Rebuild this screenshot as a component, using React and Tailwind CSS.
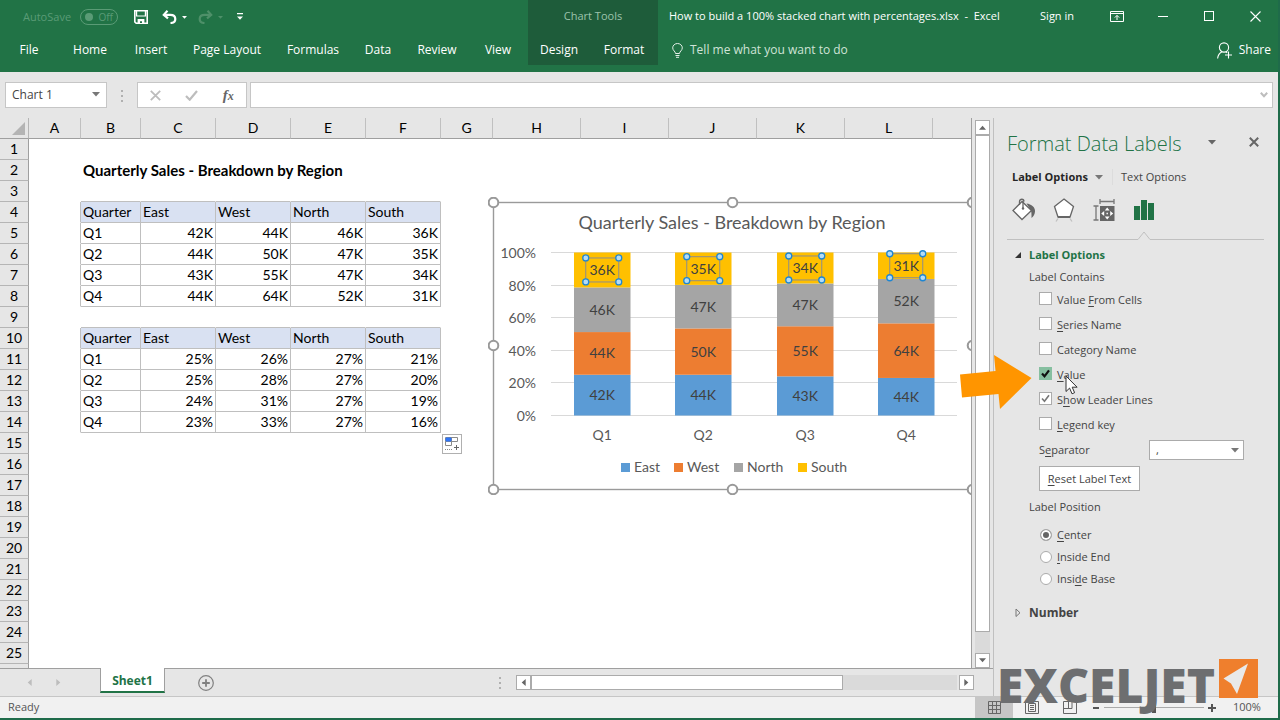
import React, { useState } from 'react';

const ribbonTabs = [
  { name: 'File', width: 'w-[58px]' },
  { name: 'Home', width: 'w-[64px]' },
  { name: 'Insert', width: 'w-[58px]' },
  { name: 'Page Layout', width: 'w-[94px]' },
  { name: 'Formulas', width: 'w-[78px]' },
  { name: 'Data', width: 'w-[52px]' },
  { name: 'Review', width: 'w-[66px]' },
  { name: 'View', width: 'w-[56px]' },
];

const columns = [
  { name: 'A', width: 'w-[52px]' },
  { name: 'B', width: 'w-[60px]' },
  { name: 'C', width: 'w-[75px]' },
  { name: 'D', width: 'w-[75px]' },
  { name: 'E', width: 'w-[75px]' },
  { name: 'F', width: 'w-[75px]' },
  { name: 'G', width: 'w-[52px]' },
  { name: 'H', width: 'w-[88px]' },
  { name: 'I', width: 'w-[88px]' },
  { name: 'J', width: 'w-[88px]' },
  { name: 'K', width: 'w-[88px]' },
  { name: 'L', width: 'w-[88px]' },
  { name: '', width: '' },
];

const regions = ['East', 'West', 'North', 'South'];

// values are rounded thousands, shares come from the unrounded numbers
const sales = [
  { quarter: 'Q1', values: [42, 44, 46, 36], shares: [25, 26, 27, 21] },
  { quarter: 'Q2', values: [44, 50, 47, 35], shares: [25, 28, 27, 20] },
  { quarter: 'Q3', values: [43, 55, 47, 34], shares: [24, 31, 27, 19] },
  { quarter: 'Q4', values: [44, 64, 52, 31], shares: [23, 33, 27, 16] },
];

const sum = (list) => list.reduce((a, b) => a + b, 0);

// sheet content, keyed by row number, starting at column B
const sheet = {
  2: ['Quarterly Sales - Breakdown by Region'],
  4: ['Quarter', ...regions],
  10: ['Quarter', ...regions],
};
sales.forEach(({ quarter, values, shares }, i) => {
  sheet[5 + i] = [quarter, ...values.map((v) => `${v}K`)];
  sheet[11 + i] = [quarter, ...shares.map((v) => `${v}%`)];
});

const ROWS = 25;
const rowNumbers = Array.from({ length: ROWS + 1 }, (_, i) => i + 1);

const Caret = ({ className = '' }) => (
  <svg viewBox="0 0 8 5" width="8" height="5" className={className} aria-hidden="true">
    <path d="M0 0h8L4 4.6z" fill="currentColor" />
  </svg>
);

const Dots = () => (
  <svg width="3" height="13" viewBox="0 0 3 13" className="shrink-0 text-[#b0b0b0]" aria-hidden="true">
    <path d="M0 1h2v2H0zM0 6h2v2H0zM0 11h2v2H0z" fill="currentColor" />
  </svg>
);

const QuickAccess = () => (
  <div className="flex h-[34px] items-center pl-[23px]">
    <span className="w-[57px] text-[11px] text-[#5a9b76]">AutoSave</span>
    <button className="flex h-4 w-[38px] items-center justify-between rounded-full border border-[#5a9b76] px-1 text-[10px] leading-none text-[#5a9b76]">
      <span className="h-2 w-2 rounded-full bg-[#5a9b76]" />
      Off
    </button>
    <button aria-label="Save" className="ml-4">
      <svg width="14" height="14" viewBox="0 0 14 14" fill="none" stroke="white" strokeWidth="1.6">
        <path d="M.8.8h12.4v12.4H2.2L.8 11.8z" />
        <path d="M2.6 1v5h8.8V1" strokeWidth="1.2" />
        <path d="M3.6 9h6.8v5H3.6z" fill="white" stroke="none" />
        <path d="M6 11.2h2V13H6z" fill="#217346" stroke="none" />
      </svg>
    </button>
    <button aria-label="Undo" className="ml-[14px]">
      <svg width="15" height="14" viewBox="0 0 15 14" fill="none" stroke="white" strokeWidth="2.2">
        <path d="M5.5 .8L1.8 4.8l4.2 3.6" />
        <path d="M2 4.8h6.3c3 0 5 1.6 5 4.1 0 2.4-1.8 4-4.8 4.1" />
      </svg>
    </button>
    <Caret className="ml-[5px] w-[5px] text-white" />
    <button aria-label="Redo" className="ml-[11px]">
      <svg width="15" height="14" viewBox="0 0 15 14" fill="none" stroke="#4e9069" strokeWidth="2.2">
        <path d="M9.5 .8l3.7 4L9 8.4" />
        <path d="M13 4.8H6.7c-3 0-5 1.6-5 4.1 0 2.4 1.8 4 4.8 4.1" />
      </svg>
    </button>
    <Caret className="ml-[5px] w-[5px] text-[#4e9069]" />
    <button aria-label="Customize Quick Access Toolbar" className="ml-[14px]">
      <svg width="6" height="8" viewBox="0 0 6 8" fill="white">
        <path d="M0 0h6v1.3H0zM0 3.4h6L3 6.8z" />
      </svg>
    </button>
  </div>
);

const WindowButtons = () => (
  <div className="flex shrink-0">
    <button aria-label="Ribbon Display Options" className="flex h-[30px] w-[46px] items-center justify-center">
      <svg width="14" height="11" viewBox="0 0 14 11" fill="none" stroke="white">
        <path d="M.5.5h13v10H.5zM.5 2.5h13M7 9V4.5M4.8 6.6L7 4.4l2.2 2.2" />
      </svg>
    </button>
    <button aria-label="Minimize" className="flex h-[30px] w-[46px] items-center justify-center">
      <span className="h-px w-[10px] bg-white" />
    </button>
    <button aria-label="Maximize" className="flex h-[30px] w-[46px] items-center justify-center">
      <span className="h-[10px] w-[10px] border border-white" />
    </button>
    <button aria-label="Close" className="flex h-[30px] w-[46px] items-center justify-center">
      <svg width="11" height="11" viewBox="0 0 11 11" fill="none" stroke="white" strokeWidth="1.1">
        <path d="M.5.5l10 10M10.5.5l-10 10" />
      </svg>
    </button>
  </div>
);

const Header = () => (
  <header className="flex h-[72px] shrink-0 bg-[#217346] text-[12px] text-white">
    <div className="w-[528px] shrink-0">
      <QuickAccess />
      <nav className="flex">
        {ribbonTabs.map((tab) => (
          <button key={tab.name} className={`h-8 shrink-0 whitespace-nowrap text-center ${tab.width}`}>
            {tab.name}
          </button>
        ))}
      </nav>
    </div>

    <div className="h-[65px] w-[130px] shrink-0 bg-[#1e5c3a]">
      <div className="flex h-[32px] items-center justify-center text-[11px] text-[#9cc3ac]">Chart Tools</div>
      <nav className="flex pt-[2px]">
        <button className="h-8 w-[62px]">Design</button>
        <button className="h-8 w-[68px]">Format</button>
      </nav>
    </div>

    <div className="min-w-0 flex-1">
      <div className="mb-[2px] flex h-[32px] items-center pl-[11px] text-[11px]">
        <span className="truncate whitespace-pre">
          How to build a 100% stacked chart with percentages.xlsx{'  -  '}Excel
        </span>
        <button className="ml-auto mr-5 shrink-0">Sign in</button>
        <WindowButtons />
      </div>
      <div className="flex h-8 items-center pl-[14px] pr-[7px]">
        <svg width="11" height="15" viewBox="0 0 11 15" fill="none" stroke="#e4efe8" aria-hidden="true">
          <path d="M3.5 10.5c0-2-2.8-3-2.8-5.6a4.8 4.4 0 0 1 9.6 0c0 2.6-2.8 3.6-2.8 5.6z" />
          <path d="M3.5 12.5h4M4 14.3h3" />
        </svg>
        <button className="ml-[7px] text-[#cfe3d7]">Tell me what you want to do</button>
        <button className="ml-auto flex items-center gap-[7px]">
          <svg width="15" height="17" viewBox="0 0 15 17" fill="none" stroke="white" strokeWidth="1.1">
            <circle cx="7" cy="5.5" r="4.6" />
            <path d="M.6 16.5c.4-3.5 2-5.5 4.4-6.7M8.8 9.8l1.4.9M11.5 9.5v7M8 13h7" />
          </svg>
          Share
        </button>
      </div>
    </div>
  </header>
);

const FormulaBar = () => (
  <div className="flex h-[46px] shrink-0 items-start px-[5px] pt-[10px]">
    <div className="flex h-[26px] w-[102px] items-center border border-[#c6c6c6] bg-white">
      <input
        aria-label="Name Box"
        defaultValue="Chart 1"
        className="w-[80px] pl-[6px] text-[12px] text-[#444] outline-none"
      />
      <button aria-label="Open name list" className="-mt-px pl-[6px] text-[#777]">
        <Caret />
      </button>
    </div>
    <div className="flex h-[26px] w-[30px] items-center justify-center">
      <Dots />
    </div>
    <div className="flex h-[26px] w-[110px] items-center justify-around border border-[#c6c6c6] bg-white">
      <button aria-label="Cancel">
        <svg width="11" height="11" viewBox="0 0 11 11" stroke="#bdbdbd" strokeWidth="1.8">
          <path d="M.8.8l9.4 9.4M10.2.8L.8 10.2" />
        </svg>
      </button>
      <button aria-label="Enter">
        <svg width="13" height="11" viewBox="0 0 13 11" fill="none" stroke="#bdbdbd" strokeWidth="2.2">
          <path d="M1 6l3.7 3.7L12 1" />
        </svg>
      </button>
      <button
        aria-label="Insert Function"
        className="font-['Liberation_Serif',serif] text-[15px] leading-none font-bold text-[#666] italic"
      >
        f<span className="text-[12px]">x</span>
      </button>
    </div>
    <div className="ml-[3px] flex h-[26px] flex-1 items-center border border-[#c6c6c6] bg-white">
      <input aria-label="Formula Bar" className="min-w-0 flex-1 px-2 text-[12px] outline-none" />
      <button aria-label="Expand Formula Bar" className="mr-1">
        <svg width="8" height="6" viewBox="0 0 8 6" fill="none" stroke="#bdbdbd" strokeWidth="2">
          <path d="M.8.8L4 4.2 7.2.8" />
        </svg>
      </button>
    </div>
  </div>
);

const seriesColors = ['#5b9bd5', '#ed7d31', '#a5a5a5', '#ffc000'];
const plot = { left: 63, right: 469, top: 55.5, bottom: 218.5 };
const barLeft = [86, 187, 289, 390];
const barWidth = 56.5;
const legendLeft = [133, 186, 246, 310];

const Handle = ({ x, y }) => <circle cx={x} cy={y} r="4.8" fill="white" stroke="#999" strokeWidth="2" />;

const Chart = () => {
  const height = plot.bottom - plot.top;

  return (
    <svg
      width="490"
      height="298"
      viewBox="0 0 490 298"
      className="absolute top-[79px] left-[488px] font-['Lato',sans-serif] text-[14px]"
      role="img"
      aria-label="Quarterly Sales - Breakdown by Region"
    >
      <rect x="5.5" y="5.5" width="479" height="287" fill="white" stroke="#9a9a9a" strokeWidth="1.4" />
      <text x="244" y="32" textAnchor="middle" fill="#595959" className="text-[18px]">
        Quarterly Sales - Breakdown by Region
      </text>

      {[100, 80, 60, 40, 20, 0].map((tick) => {
        const y = Math.floor(plot.bottom - (height * tick) / 100) + 0.5;
        return (
          <g key={tick}>
            <path d={`M${plot.left} ${y}H${plot.right}`} stroke="#d9d9d9" />
            <text x="48" y={y + 5} textAnchor="end" fill="#595959">{tick}%</text>
          </g>
        );
      })}

      {sales.map(({ quarter, values }, i) => {
        const total = sum(values);
        const center = barLeft[i] + barWidth / 2;
        return (
          <g key={quarter}>
            {values.map((value, s) => {
              const before = sum(values.slice(0, s));
              const y1 = plot.bottom - (height * before) / total;
              const y2 = plot.bottom - (height * (before + value)) / total;
              const mid = (y1 + y2) / 2;
              return (
                <g key={regions[s]}>
                  <rect x={barLeft[i]} y={y2} width={barWidth} height={y1 - y2} fill={seriesColors[s]} />
                  {s === 3 && (
                    <g>
                      <rect x={center - 16.5} y={mid - 12} width="33" height="24" fill="none" stroke="#8c8c8c" />
                      {[[-16.5, -12], [16.5, -12], [-16.5, 12], [16.5, 12]].map(([dx, dy]) => (
                        <circle
                          key={`${dx},${dy}`}
                          cx={center + dx}
                          cy={mid + dy}
                          r="3"
                          fill="#b5dcf5"
                          stroke="#1e86d2"
                          strokeWidth="1.3"
                        />
                      ))}
                    </g>
                  )}
                  <text x={center} y={mid + 5} textAnchor="middle" fill="#404040">{value}K</text>
                </g>
              );
            })}
            <text x={center} y="243" textAnchor="middle" fill="#595959">{quarter}</text>
          </g>
        );
      })}

      {regions.map((region, i) => (
        <g key={region}>
          <rect x={legendLeft[i]} y="266" width="9" height="9" fill={seriesColors[i]} />
          <text x={legendLeft[i] + 13} y="275" fill="#595959">{region}</text>
        </g>
      ))}

      {[5.5, 244.5, 484.5].map((x) =>
        [5.5, 148.5, 292.5].map((y) =>
          x === 244.5 && y === 148.5 ? null : <Handle key={`${x},${y}`} x={x} y={y} />
        )
      )}
    </svg>
  );
};

const cellClass = (row, col, text) => {
  const inTable = (row >= 4 && row <= 8) || (row >= 10 && row <= 14);
  const borderBottom = (inTable || row === 3 || row === 9) && col >= 1 && col <= 5;
  const borderRight = inTable && col >= 0 && col <= 5;
  const header = (row === 4 || row === 10) && col >= 1 && col <= 5;
  return [
    'h-[21px] border-r border-b p-0 px-[2px] whitespace-nowrap',
    borderBottom ? 'border-b-[#bfbfbf]' : 'border-b-transparent',
    borderRight ? 'border-r-[#bfbfbf]' : 'border-r-transparent',
    header ? 'bg-[#d9e1f2]' : '',
    row === 2 ? 'text-[15px] font-bold' : '',
    /^\d/.test(text) ? 'text-right' : 'text-left',
  ].join(' ');
};

const Grid = () => (
  <div className="relative min-w-0 flex-1 overflow-hidden border-r border-[#9f9f9f] bg-white">
    <table className="w-full table-fixed border-separate border-spacing-0 font-['Lato',sans-serif] text-[14px] leading-5 text-black">
      <thead>
        <tr className="bg-[#e6e6e6]">
          <th className="h-[21px] w-[29px] border-r border-b border-r-[#b5b5b5] border-b-[#9f9f9f] p-0">
            <svg width="13" height="13" viewBox="0 0 13 13" className="ml-3" aria-label="Select All">
              <path d="M13 0v13H0z" fill="#b4b4b4" />
            </svg>
          </th>
          {columns.map((col, i) => (
            <th
              key={i}
              className={`h-[21px] border-b border-b-[#9f9f9f] p-0 font-normal ${col.name ? 'border-r border-r-[#c0c0c0]' : ''} ${col.width}`}
            >
              {col.name}
            </th>
          ))}
        </tr>
      </thead>
      <tbody>
        {rowNumbers.map((row) => (
          <tr key={row}>
            <th className="h-[21px] border-r border-b border-r-[#9f9f9f] border-b-[#b5b5b5] bg-[#e6e6e6] p-0 font-normal">
              {row <= ROWS ? row : ''}
            </th>
            {columns.map((_, col) => {
              const text = (sheet[row] && sheet[row][col - 1]) || '';
              return (
                <td key={col} className={cellClass(row, col, text)}>
                  {text}
                </td>
              );
            })}
          </tr>
        ))}
      </tbody>
    </table>

    <Chart />

    {/* Quick analysis button at the corner of the second table */}
    <button
      aria-label="Quick Analysis"
      className="absolute top-[316px] left-[442px] flex h-5 w-5 items-center justify-center border border-[#b0b0b0] bg-white"
    >
      <svg width="15" height="14" viewBox="0 0 15 14" fill="none" stroke="#8a8a8a">
        <path d="M.5.5h12v4H.5zM6.5.5v4M.5 4.5h6v4h-6z" />
        <path d="M1 1h5v3H1z" fill="#2f75f5" stroke="#2f75f5" />
        <path d="M0 12.5h7" strokeDasharray="1 1" />
        <path d="M11.5 8v5M9 10.5h5" stroke="#666" />
      </svg>
    </button>
  </div>
);

const VerticalScroll = () => (
  <div className="flex w-[22px] shrink-0 flex-col items-start border-r border-[#c0c0c0] pt-[2px] pl-[3px]">
    <button aria-label="Scroll up" className="flex h-[15px] w-[15px] items-center justify-center border border-[#ababab] bg-white text-[#666]">
      <Caret className="w-[7px] rotate-180" />
    </button>
    <div className="flex w-[15px] flex-1 flex-col bg-[#dadada]">
      <div className="h-[96%] border border-[#ababab] bg-white" />
    </div>
    <button aria-label="Scroll down" className="flex h-[15px] w-[15px] items-center justify-center border border-[#ababab] bg-white text-[#666]">
      <Caret className="w-[7px]" />
    </button>
  </div>
);

const SheetTabs = () => (
  <div className="flex h-7 shrink-0 border-r border-[#c0c0c0]">
    <div className="flex w-[100px] items-center border-t border-[#9f9f9f] pl-[26px]">
      <button aria-label="Previous sheet" className="w-[29px]">
        <Caret className="w-[7px] rotate-90 text-[#bdbdbd]" />
      </button>
      <button aria-label="Next sheet">
        <Caret className="w-[7px] -rotate-90 text-[#bdbdbd]" />
      </button>
    </div>
    <button className="h-[25px] w-[65px] border-x border-b-2 border-x-[#9f9f9f] border-b-[#217346] bg-white pt-[3px] text-[12px] font-bold text-[#217346]">
      Sheet1
    </button>
    <div className="flex flex-1 items-center border-t border-[#9f9f9f]">
      <button aria-label="New sheet" className="ml-[33px]">
        <svg width="16" height="16" viewBox="0 0 16 16" fill="none" stroke="#808080">
          <circle cx="8" cy="8" r="7.3" strokeWidth="1.2" />
          <path d="M8 4.2v7.6M4.2 8h7.6" strokeWidth="1.8" />
        </svg>
      </button>
      <div className="ml-auto">
        <Dots />
      </div>
      <div className="mr-[19px] ml-[14px] flex h-[15px] w-[458px]">
        <button aria-label="Scroll left" className="flex w-[15px] items-center justify-center border border-[#ababab] bg-white text-[#666]">
          <Caret className="w-[7px] shrink-0 rotate-90" />
        </button>
        <div className="mr-[2px] flex-1 bg-[#dadada]">
          <div className="h-full w-[312px] border border-[#ababab] bg-white" />
        </div>
        <button aria-label="Scroll right" className="flex w-[15px] items-center justify-center border border-[#ababab] bg-white text-[#666]">
          <Caret className="w-[7px] shrink-0 -rotate-90" />
        </button>
      </div>
    </div>
  </div>
);

// [text before the access key, access key, rest]
const labelChecks = [
  { id: 'cells', text: ['Value ', 'F', 'rom Cells'], checked: false },
  { id: 'series', text: ['', 'S', 'eries Name'], checked: false },
  { id: 'category', text: ['Cate', 'g', 'ory Name'], checked: false },
  { id: 'value', text: ['', 'V', 'alue'], checked: true },
  { id: 'leader', text: ['S', 'h', 'ow Leader Lines'], checked: true },
  { id: 'legend', text: ['', 'L', 'egend key'], checked: false },
];

const positions = [
  { id: 'center', text: ['', 'C', 'enter'] },
  { id: 'end', text: ['', 'I', 'nside End'] },
  { id: 'base', text: ['Insi', 'd', 'e Base'] },
];

const KeyText = ({ text }) => (
  <span className="whitespace-pre">
    {text[0]}
    <u className="underline-offset-2">{text[1]}</u>
    {text[2]}
  </span>
);

const Pointer = () => (
  <>
    <svg width="74" height="56" viewBox="0 0 74 56" className="absolute -top-[8px] -left-[79px]" aria-hidden="true">
      <path d="M0 20.5L35.5 17 34 1 71.5 24 40 55 38.5 40 2 43.5z" fill="#ff9500" />
    </svg>
    <svg width="13" height="20" viewBox="0 0 13 20" className="absolute top-[13px] left-[26px] z-10" aria-hidden="true">
      <path d="M1 1v15.5l3.6-3.4 2.4 5.7 2.6-1.1-2.4-5.5h4.9z" fill="white" stroke="#333" />
    </svg>
  </>
);

const FormatPane = () => {
  const [checks, setChecks] = useState(
    Object.fromEntries(labelChecks.map((c) => [c.id, c.checked]))
  );
  const [position, setPosition] = useState('center');

  return (
    <aside className="w-[284px] shrink-0 pr-[14px] pl-[13px] text-[11px] leading-4 text-[#444]">
      <div className="flex h-[47px] items-center pt-[5px]">
        <h2 className="text-[20px] font-light text-[#217346]">Format Data Labels</h2>
        <button aria-label="Task Pane Options" className="-mt-1 ml-auto text-[#666]">
          <Caret className="w-[10px]" />
        </button>
        <button aria-label="Close pane" className="-mt-1 mr-[5px] ml-[32px]">
          <svg width="10" height="10" viewBox="0 0 10 10" stroke="#666" strokeWidth="2">
            <path d="M.8.8l8.4 8.4M9.2.8L.8 9.2" />
          </svg>
        </button>
      </div>

      <div className="flex h-6 items-center pl-[5px]">
        <button className="flex items-center gap-[6px] font-bold text-[#262626]">
          Label Options
          <Caret className="w-[10px] text-[#777]" />
        </button>
        <span className="mx-2 h-4 w-px bg-[#dcdcdc]" />
        <button>Text Options</button>
      </div>

      <div className="flex h-[42px] items-center gap-4 pl-[5px]">
        <button aria-label="Fill & Line">
          <svg width="24" height="24" viewBox="0 0 24 24" fill="none" stroke="#666" strokeWidth="1.3">
            <path d="M10 3.5L1 12.5 10 21.5l9.5-9z" fill="white" />
            <path d="M14.5 5.5c5 .5 9 4 8.500 8-.2 3-1.500 5-3.500 6.500 0-4 .3-7-1.500-9z" fill="#666" stroke="none" />
            <path d="M7.500 7V3.500c0-3 4.500-3 4.500 0M11 3v7.500" />
            <circle cx="11" cy="10.5" r="1.2" fill="#666" stroke="none" />
          </svg>
        </button>
        <button aria-label="Effects">
          <svg width="24" height="24" viewBox="0 0 24 24" fill="none" stroke="#666" strokeWidth="1.3">
            <path d="M12 1l9.5 7.5L18 19H6L2.5 8.5z" fill="white" />
            <path d="M6 19h12" strokeWidth="2" />
            <path d="M6 20.5l-2 3M18 20.5l2 3" stroke="#c0c0c0" />
          </svg>
        </button>
        <button aria-label="Size & Properties">
          <svg width="24" height="24" viewBox="0 0 24 24" fill="none" stroke="#777" strokeWidth="1.3">
            <path d="M8 3.5h14M8 1v5M22 1v5M4 8v14M1.5 8h5M1.5 22h5" />
            <path d="M8 8h14.5v15H8z" fill="#666" stroke="none" />
            <path
              d="M15.2 9.5l2.4 3h-4.8zM15.2 21.500l2.400-3h-4.800zM9.200 15.500l3-2.400v4.800zM21.200 15.500l-3-2.400v4.800zM14.500 14.800h1.400v1.400h-1.400z"
              fill="white"
              stroke="none"
            />
          </svg>
        </button>
        <button aria-label="Label Options">
          <svg width="24" height="24" viewBox="0 0 24 24" fill="#217346">
            <path d="M2 8h6v14H2zM9 2h6v20H9zM16 5h6v17h-6z" />
          </svg>
        </button>
      </div>

      <svg width="100%" height="9" className="block" fill="none" stroke="#c0c0c0" aria-hidden="true">
        <path d="M0 8.5h131l6-7.5 6 7.5h2000" />
      </svg>

      <div className="flex h-[29px] items-center pt-px font-bold text-[#217346]">
        <svg width="22" height="8" viewBox="0 0 22 8" aria-hidden="true">
          <path d="M14 1v6H8z" fill="#333" />
        </svg>
        Label Options
      </div>
      <p className="flex h-[16px] items-center pl-[22px]">Label Contains</p>

      <div className="pt-[2px] pl-8">
        {labelChecks.map((item) => (
          <div key={item.id} className="relative flex h-[25px] items-center">
            <input
              type="checkbox"
              id={item.id}
              checked={checks[item.id]}
              onChange={() => setChecks({ ...checks, [item.id]: !checks[item.id] })}
              className={`mb-[2px] h-[13px] w-[13px] appearance-none border ${
                item.id === 'value' ? 'border-[#86bfa0] bg-[#86bfa0]' : 'border-[#ababab] bg-white'
              }`}
            />
            {checks[item.id] && (
              <svg
                width="13"
                height="13"
                viewBox="0 0 13 13"
                fill="none"
                stroke={item.id === 'value' ? '#111' : '#777'}
                strokeWidth={item.id === 'value' ? 2.2 : 1.6}
                className="pointer-events-none absolute top-[5px] left-0"
              >
                <path d="M3 6.5l2.5 2.8L10 3.3" />
              </svg>
            )}
            <label htmlFor={item.id} className="ml-[5px]">
              <KeyText text={item.text} />
            </label>
            {item.id === 'value' && <Pointer />}
          </div>
        ))}
      </div>

      <div className="flex h-[26px] items-center pr-5 pl-8">
        <label htmlFor="separator">
          <KeyText text={['S', 'e', 'parator']} />
        </label>
        <div className="relative ml-auto flex items-center">
          <select
            id="separator"
            className="h-5 w-[95px] appearance-none border border-[#ababab] bg-white px-[6px] text-[11px] leading-4"
          >
            <option>,</option>
            <option>;</option>
            <option>.</option>
          </select>
          <Caret className="pointer-events-none absolute right-[5px] text-[#777]" />
        </div>
      </div>
      <div className="pt-[3px] pl-8">
        <button className="h-[25px] w-[101px] border border-[#ababab] bg-white whitespace-nowrap">
          <KeyText text={['', 'R', 'eset Label Text']} />
        </button>
      </div>

      <p className="flex h-[31px] items-center pl-[22px]">Label Position</p>
      <div className="pt-[2px] pl-[33px]">
        {positions.map((item) => (
          <div key={item.id} className="flex h-[22px] items-center">
            <input
              type="radio"
              name="position"
              id={item.id}
              checked={position === item.id}
              onChange={() => setPosition(item.id)}
              className="mb-px h-3 w-3 appearance-none rounded-full border border-[#ababab] bg-white checked:bg-[#666] checked:shadow-[inset_0_0_0_2px_white]"
            />
            <label htmlFor={item.id} className="ml-[5px]">
              <KeyText text={item.text} />
            </label>
          </div>
        ))}
      </div>

      <div className="mt-3 flex h-[22px] items-center text-[12px] font-bold">
        <svg width="22" height="10" viewBox="0 0 22 10" fill="none" stroke="#777" aria-hidden="true">
          <path d="M9 1l4 3.8L9 8.5z" />
        </svg>
        Number
      </div>
    </aside>
  );
};

const StatusBar = () => (
  <footer className="flex h-[22px] shrink-0 items-center border-t border-[#c6c6c6] bg-[#f1f1f1] pl-2 text-[11px] text-[#555]">
    <span>Ready</span>
    <button aria-label="Normal view" className="ml-auto flex h-full w-[38px] items-center justify-center bg-[#c6c6c6]">
      <svg width="13" height="13" viewBox="0 0 13 13" fill="none" stroke="#666">
        <path d="M.5.5h12v12H.5zM4.5.5v12M8.5.5v12M.5 4.5h12M.5 8.5h12" />
      </svg>
    </button>
    <button aria-label="Page Layout view" className="flex h-full w-[38px] items-center justify-center">
      <svg width="14" height="13" viewBox="0 0 14 13" fill="none" stroke="#666">
        <path d="M.5.5h13v12H.5zM3.5 2.5h7v8h-7zM5 4.5h4M5 6.5h4M5 8.5h4" />
      </svg>
    </button>
    <button aria-label="Page Break view" className="flex h-full w-[38px] items-center justify-center">
      <svg width="14" height="13" viewBox="0 0 14 13" fill="none" stroke="#666">
        <path d="M.5.5h13v12H.5zM.5 7.5h8.5v-7M5.5.5v7" />
      </svg>
    </button>
    <button aria-label="Zoom out" className="ml-px flex h-4 w-3 items-center justify-center">
      <span className="h-[2px] w-[6px] bg-[#555]" />
    </button>
    <input
      type="range"
      aria-label="Zoom"
      min="10"
      max="190"
      defaultValue="100"
      className="mx-[2px] h-[11px] w-[100px] appearance-none bg-linear-to-b from-transparent from-45% via-[#aaa] via-50% to-transparent to-55% [&::-webkit-slider-thumb]:h-[11px] [&::-webkit-slider-thumb]:w-1 [&::-webkit-slider-thumb]:appearance-none [&::-webkit-slider-thumb]:bg-[#555]"
    />
    <button aria-label="Zoom in" className="flex h-4 w-3 items-center justify-center">
      <svg width="8" height="8" viewBox="0 0 8 8" stroke="#555" strokeWidth="2">
        <path d="M4 0v8M0 4h8" />
      </svg>
    </button>
    <span className="w-[60px] pl-[15px]">100%</span>
  </footer>
);

const Logo = () => (
  <div className="pointer-events-none absolute right-[20px] bottom-[6px] flex items-start text-[#6d6e70]">
    <span className="font-['Open_Sans',sans-serif] text-[48px] leading-[54px] font-extrabold">EXCELJET</span>
    <svg width="39" height="39" viewBox="0 0 39 39" className="mt-px ml-1" aria-hidden="true">
      <path d="M0 0h39v39H0z" fill="#ef7f2d" />
      <path d="M29 4.5L4.5 19.5l7.5 5L18 35z" fill="#e9e9e9" />
    </svg>
  </div>
);

const App = () => {
  return (
    <div className="relative flex h-screen flex-col overflow-hidden border-r-2 border-b-2 border-[#1f6b4a] bg-[#e6e6e6] font-['Open_Sans',sans-serif]">
      <Header />
      <FormulaBar />
      <main className="flex min-h-0 flex-1">
        <div className="flex min-w-0 flex-1 flex-col">
          <div className="flex min-h-0 flex-1">
            <Grid />
            <VerticalScroll />
          </div>
          <SheetTabs />
        </div>
        <FormatPane />
      </main>
      <StatusBar />
      <Logo />
    </div>
  );
};

export default App;
